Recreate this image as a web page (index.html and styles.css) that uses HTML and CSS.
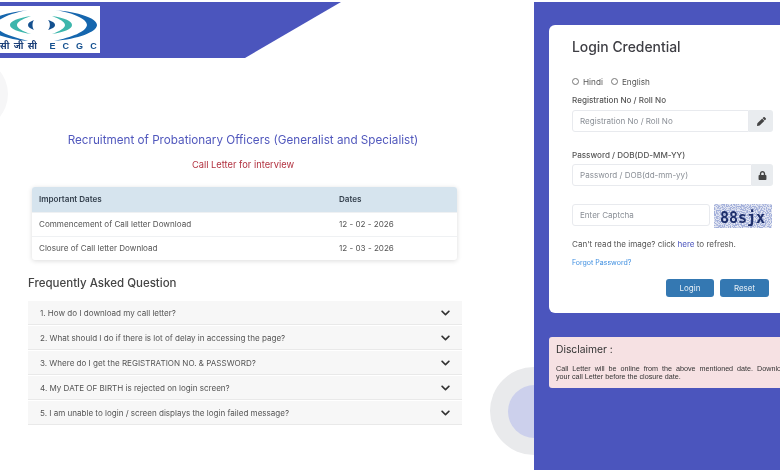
FILE: index.html
```html
<!DOCTYPE html>
<html lang="en">
<head>
<meta charset="utf-8">
<title>Recruitment of Probationary Officers</title>
<link rel="stylesheet" href="styles.css">
</head>
<body>
<div class="page">
  <div class="blob blob-left"></div>
  <div class="blob blob-bottom"><div class="blob-inner"></div></div>
  <main class="left">
    <header class="band">
      <div class="logo">
        <svg class="logo-mark" viewBox="0 0 100 36" width="100" height="36">
          <path d="M28 4 C10 6 -14 12 -14 19 C-14 26 5 33 28 35 C12 31 -4 26 -4 19 C-4 13 12 7 28 4Z" fill="#1566ae"/>
          <path d="M55 4 C78 6 97 12 97 19 C97 26 78 33 54 35 C72 31 86 26 87 19 C87 13 74 7 55 4Z" fill="#1566ae"/>
          <path d="M31 10 C18 12 10 15 10 19 C10 23 18 26 31 28 C22 25 17 22 17 19 C17 16 22 13 31 10Z" fill="#3cb6ac"/>
          <path d="M52 10 C65 12 72 15 72 19 C72 23 65 26 52 28 C60 25 65 22 65 19 C65 16 60 13 52 10Z" fill="#3cb6ac"/>
          <path d="M34 14 C30 15.500 28 17 28 19 C28 21 30 22.500 34 24 C32 21.500 32 16.500 34 14Z" fill="#14508f"/>
          <path d="M48 14 C53 15.500 55 17 55 19 C55 21 53 22.500 48 24 C50.500 21.500 50.500 16.500 48 14Z" fill="#14508f"/>
        </svg>
        <div class="logo-text"><span class="logo-hi">सी जी सी</span><span class="logo-en">E C G C</span></div>
      </div>
    </header>
    <div class="content">
      <h1 class="title">Recruitment of Probationary Officers (Generalist and Specialist)</h1>
      <h2 class="subtitle">Call Letter for interview</h2>
      <div class="table-card">
        <div class="row row-head"><span>Important Dates</span><span class="date">Dates</span></div>
        <div class="row"><span>Commencement of Call letter Download</span><span class="date">12 - 02 - 2026</span></div>
        <div class="row"><span>Closure of Call letter Download</span><span class="date">12 - 03 - 2026</span></div>
      </div>
      <h3 class="faq-title">Frequently Asked Question</h3>
      <div class="faq">
        <div class="faq-item"><span>1. How do I download my call letter?</span><svg class="chev" viewBox="0 0 448 512"><path d="M207.029 381.476L12.686 187.132c-9.373-9.373-9.373-24.569 0-33.941l22.667-22.667c9.357-9.357 24.522-9.375 33.901-.04L224 284.505l154.745-154.021c9.379-9.335 24.544-9.317 33.901.04l22.667 22.667c9.373 9.373 9.373 24.569 0 33.941L240.971 381.476c-9.373 9.372-24.569 9.372-33.942 0z"/></svg></div>
        <div class="faq-item"><span>2. What should I do if there is lot of delay in accessing the page?</span><svg class="chev" viewBox="0 0 448 512"><path d="M207.029 381.476L12.686 187.132c-9.373-9.373-9.373-24.569 0-33.941l22.667-22.667c9.357-9.357 24.522-9.375 33.901-.04L224 284.505l154.745-154.021c9.379-9.335 24.544-9.317 33.901.04l22.667 22.667c9.373 9.373 9.373 24.569 0 33.941L240.971 381.476c-9.373 9.372-24.569 9.372-33.942 0z"/></svg></div>
        <div class="faq-item"><span>3. Where do I get the REGISTRATION NO. &amp; PASSWORD?</span><svg class="chev" viewBox="0 0 448 512"><path d="M207.029 381.476L12.686 187.132c-9.373-9.373-9.373-24.569 0-33.941l22.667-22.667c9.357-9.357 24.522-9.375 33.901-.04L224 284.505l154.745-154.021c9.379-9.335 24.544-9.317 33.901.04l22.667 22.667c9.373 9.373 9.373 24.569 0 33.941L240.971 381.476c-9.373 9.372-24.569 9.372-33.942 0z"/></svg></div>
        <div class="faq-item"><span>4. My DATE OF BIRTH is rejected on login screen?</span><svg class="chev" viewBox="0 0 448 512"><path d="M207.029 381.476L12.686 187.132c-9.373-9.373-9.373-24.569 0-33.941l22.667-22.667c9.357-9.357 24.522-9.375 33.901-.04L224 284.505l154.745-154.021c9.379-9.335 24.544-9.317 33.901.04l22.667 22.667c9.373 9.373 9.373 24.569 0 33.941L240.971 381.476c-9.373 9.372-24.569 9.372-33.942 0z"/></svg></div>
        <div class="faq-item"><span>5. I am unable to login / screen displays the login failed message?</span><svg class="chev" viewBox="0 0 448 512"><path d="M207.029 381.476L12.686 187.132c-9.373-9.373-9.373-24.569 0-33.941l22.667-22.667c9.357-9.357 24.522-9.375 33.901-.04L224 284.505l154.745-154.021c9.379-9.335 24.544-9.317 33.901.04l22.667 22.667c9.373 9.373 9.373 24.569 0 33.941L240.971 381.476c-9.373 9.372-24.569 9.372-33.942 0z"/></svg></div>
      </div>
    </div>
  </main>
  <aside class="right">
    <form class="card">
      <h2 class="card-title">Login Credential</h2>
      <div class="langs">
        <label class="lang"><span class="radio"></span>Hindi</label>
        <label class="lang"><span class="radio"></span>English</label>
      </div>
      <div class="field-label">Registration No / Roll No</div>
      <div class="group">
        <div class="input">Registration No / Roll No</div>
        <div class="addon addon-wide"><svg class="addon-icon" viewBox="0 0 512 512"><path d="M497.9 142.1l-46.1 46.1c-4.7 4.7-12.3 4.7-17 0l-111-111c-4.7-4.7-4.7-12.3 0-17l46.1-46.1c18.7-18.7 49.1-18.7 67.9 0l60.1 60.1c18.8 18.7 18.8 49.1 0 67.9zM284.2 99.8L21.6 362.4.4 483.9c-2.9 16.4 11.4 30.6 27.8 27.8l121.5-21.3 262.6-262.6c4.7-4.7 4.7-12.3 0-17l-111-111c-4.8-4.7-12.4-4.7-17.1 0z"/></svg></div>
      </div>
      <div class="field-label field-label-pass">Password / DOB(DD-MM-YY)</div>
      <div class="group group-pass">
        <div class="input">Password / DOB(dd-mm-yy)</div>
        <div class="addon"><svg class="addon-icon" viewBox="0 0 448 512"><path d="M400 224h-24v-72C376 68.2 307.8 0 224 0S72 68.2 72 152v72H48c-26.5 0-48 21.500-48 48v192c0 26.500 21.500 48 48 48h352c26.500 0 48-21.500 48-48V272c0-26.500-21.500-48-48-48zm-104 0H152v-72c0-39.700 32.300-72 72-72s72 32.300 72 72v72z"/></svg></div>
      </div>
      <div class="captcha-row">
        <div class="input input-captcha">Enter Captcha</div>
        <svg class="captcha" viewBox="0 0 58 24" width="58" height="24">
          <defs><filter id="noise" x="0" y="0" width="100%" height="100%"><feTurbulence type="fractalNoise" baseFrequency="0.8" numOctaves="2" seed="7"/><feColorMatrix values="0 0 0 0 0.36  0 0 0 0 0.43  0 0 0 0 0.7  6 0 0 0 -2.5"/></filter></defs>
          <rect width="58" height="24" fill="#e4e7f2"/>
          <rect width="58" height="24" filter="url(#noise)"/>
          <text class="captcha-text" x="6" y="19">88sjx</text>
        </svg>
      </div>
      <p class="refresh">Can't read the image? click <a class="here">here</a> to refresh.</p>
      <a class="forgot">Forgot Password?</a>
      <div class="buttons">
        <button class="btn" type="button">Login</button>
        <button class="btn" type="button">Reset</button>
      </div>
    </form>
    <section class="disclaimer">
      <h3 class="disc-title">Disclaimer :</h3>
      <p class="disc-text"><span class="disc-first">Call Letter will be online from the above mentioned date. Download</span>your call Letter before the closure date.</p>
    </section>
  </aside>
</div>
</body>
</html>
```
FILE: styles.css
```css
* { box-sizing: border-box; }
html, body { margin: 0; padding: 0; }
body { font-family: Inter, "Noto Sans", sans-serif; background: #fff; }
.page { position: relative; display: flex; width: 780px; height: 470px; overflow: hidden; padding-top: 2px; background: #fff; filter: blur(.3px); }

.blob { position: absolute; border-radius: 50%; }
.blob-left { left: -64px; top: 58px; width: 72px; height: 72px; background: #f6f6f7; }
.blob-bottom { left: 490px; top: 367px; width: 88px; height: 88px; background: #e9eaec; display: flex; align-items: center; justify-content: center; }
.blob-inner { width: 53px; height: 53px; border-radius: 50%; background: #ccd0ec; }

.left { position: relative; width: 534px; flex: none; }
.band { width: 341px; height: 56px; background: #4b55bd; clip-path: polygon(0 0, 100% 0, 245px 100%, 0 100%); padding-top: 4px; }
.logo { width: 100px; height: 47px; background: #fff; overflow: hidden; }
.logo-mark { display: block; }
.logo-text { display: flex; justify-content: space-between; align-items: center; height: 11px; margin-top: -2px; padding-right: 3px; }
.logo-hi { font-family: "Noto Sans", "DejaVu Sans", sans-serif; font-size: 9px; font-weight: 700; color: #1b3f78; word-spacing: 2px; white-space: nowrap; }
.logo-en { font-family: "Liberation Sans", sans-serif; font-size: 9px; font-weight: 700; color: #14508f; letter-spacing: 2.3px; margin-right: -2px; }

.content { display: flex; flex-direction: column; padding: 0 0 0 28px; }
.title { width: 430px; margin: 74px 0 0 0; font-size: 11.7px; line-height: 16px; font-weight: 400; color: #5158bd; text-align: center; white-space: nowrap; }
.subtitle { width: 430px; margin: 10px 0 0 0; font-size: 9.3px; line-height: 14px; font-weight: 400; color: #b23240; text-align: center; }
.table-card { width: 425px; margin: 15px 0 0 4px; border-radius: 3px; overflow: hidden; box-shadow: 0 1px 5px rgba(0,0,0,.14); background: #fff; }
.row { display: flex; height: 24px; align-items: center; padding: 0 7px 1px; font-size: 8.1px; color: #555; border-top: 1px solid #eff1f3; }
.row span:first-child { width: 300px; }
.row-head { height: 25px; background: #d6e4ee; color: #36424f; font-weight: 600; border-top: 0; }
.faq-title { margin: 15px 0 0 0; font-size: 11.5px; line-height: 16px; font-weight: 500; color: #444; }
.faq { display: flex; flex-direction: column; gap: 1px; width: 434px; margin-top: 10px; }
.faq-item { display: flex; align-items: center; justify-content: space-between; height: 24px; padding: 1px 12px 0 12px; background: #f7f7f7; border-bottom: 1px solid #e9e9e9; font-size: 8.05px; color: #555; }
.chev { width: 9px; height: 10px; fill: #333; }

.right { position: relative; flex: none; width: 246px; padding: 23px 0 0 15px; background: #4b55bd; }
.card { display: flex; flex-direction: column; width: 240px; height: 288px; padding: 13px 16px 0 23px; background: #fff; border-radius: 6px; }
.card-title { margin: 0; font-size: 13.9px; line-height: 18px; font-weight: 500; color: #3e3e44; }
.langs { display: flex; gap: 8px; margin-top: 20px; font-size: 8.2px; line-height: 12px; color: #555; }
.lang { display: flex; align-items: center; gap: 4px; }
.radio { width: 7px; height: 7px; border: 1px solid #777; border-radius: 50%; background: #fff; margin-top: -2px; }
.field-label { margin-top: 6px; font-size: 8.1px; line-height: 12px; font-weight: 500; color: #555; }
.field-label-pass { margin-top: 17px; }
.group { display: flex; flex: none; height: 22px; margin-top: 4px; width: 201px; }
.group-pass { margin-top: 3px; }
.input { flex: 1; display: flex; align-items: center; padding: 0 7px; border: 1px solid #e8eaee; border-radius: 3px 0 0 3px; background: #fff; font-size: 8.05px; color: #8a8f96; }
.addon { display: flex; align-items: center; justify-content: center; flex: none; width: 21px; background: #e9ecef; border-radius: 0 3px 3px 0; }
.addon-wide { width: 24px; }
.addon-icon { width: 9px; height: 9px; fill: #444; }
.captcha-row { display: flex; gap: 4px; margin-top: 18px; align-items: flex-start; }
.input-captcha { flex: none; width: 138px; height: 22px; border-radius: 3px; }
.captcha { display: block; flex: none; }
.captcha-text { font-family: "DejaVu Sans Mono", monospace; font-weight: 700; font-size: 15px; fill: #1e2f6b; }
.refresh { margin: 10px 0 0 0; font-size: 8.05px; line-height: 12px; color: #555; }
.here { color: #4b55bd; }
.forgot { margin-top: 8px; font-size: 7px; line-height: 10px; color: #3d8ee0; }
.buttons { display: flex; justify-content: flex-end; gap: 6px; margin-top: 11px; padding-right: 4px; }
.btn { width: 48px; height: 18px; padding: 0; border: 0; border-radius: 3px; background: #3478b2; color: #e8f0f7; font-family: inherit; font-size: 8px; }
.btn + .btn { width: 49px; }

.disclaimer { width: 247px; height: 51px; margin-top: 24px; padding: 6px 7px; background: #f6e1e3; border-radius: 3px; }
.disc-title { margin: 0; font-size: 10.3px; line-height: 13px; font-weight: 400; color: #333; }
.disc-text { margin: 9px 0 0 0; font-family: "Liberation Sans", sans-serif; font-size: 7.2px; line-height: 8.3px; color: #333; }
.disc-first { display: block; text-align: justify; text-align-last: justify; }
```
